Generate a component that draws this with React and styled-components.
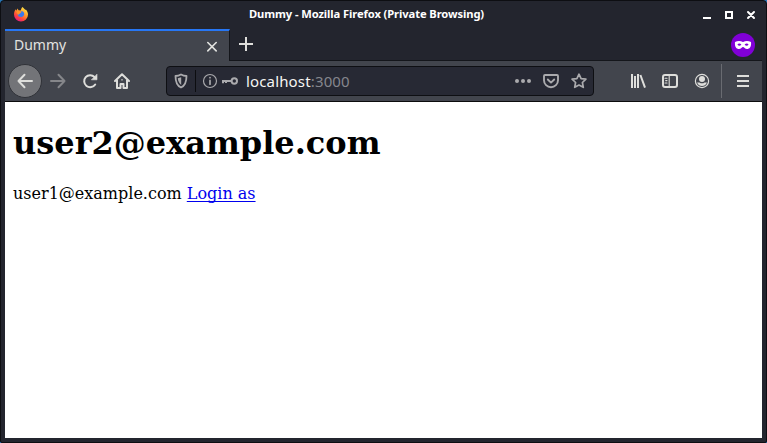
import React from 'react';
import styled, { createGlobalStyle } from 'styled-components';

const GlobalStyle = createGlobalStyle`
  * { box-sizing: border-box; }
  html, body { margin: 0; padding: 0; background: #2777b8; overflow: hidden; }
`;

const Window = styled.div`
  width: 767px;
  height: 443px;
  display: flex;
  flex-direction: column;
  padding: 0 4px 4px;
  background: #23252e;
  border: 1px solid #0d0e12;
  border-radius: 4px 4px 2px 2px;
  font-family: 'Noto Sans', sans-serif;
`;

const TitleBar = styled.header`
  height: 28px;
  flex: none;
  display: grid;
  grid-template-columns: 80px 1fr 80px;
  align-items: center;
`;

const Logo = styled.span`
  display: flex;
  padding-left: 8px;
  margin-top: -2px;
`;

const Title = styled.h2`
  margin: 0;
  padding: 0 34px 2px 0;
  text-align: center;
  white-space: nowrap;
  color: #fff;
  font-size: 11.2px;
  font-weight: 700;
  line-height: 16px;
  letter-spacing: -0.1px;
`;

const WindowControls = styled.div`
  display: flex;
  gap: 8px;
  justify-content: flex-end;
  padding-right: 4px;
  margin-top: -3px;
`;

const TabStrip = styled.div`
  height: 32px;
  flex: none;
  display: flex;
`;

const Tab = styled.div`
  width: 225px;
  height: 33px;
  padding: 0 9px 0 9px;
  display: flex;
  align-items: center;
  justify-content: space-between;
  color: #e2e3e0;
  font-size: 14px;
  background: #42454d;
  border-top: 2px solid #2777f5;
  border-right: 1px solid #14161b;
`;

const TabLabel = styled.span`
  line-height: 20px;
  padding-bottom: 3px;
`;

const StripRest = styled.div`
  flex: 1;
  height: 32px;
  display: flex;
  align-items: center;
  justify-content: space-between;
  padding: 0 7px 0 8px;
  border-bottom: 1px solid #14161b;
`;

const NewTab = styled.span`
  display: flex;
  padding-bottom: 2px;
  color: #dededb;
`;

const PrivateBadge = styled.span`
  display: flex;
  align-items: center;
  justify-content: center;
  width: 24px;
  height: 24px;
  border-radius: 50%;
  background: #8000d7;
`;

const Toolbar = styled.nav`
  height: 41px;
  flex: none;
  display: flex;
  align-items: center;
  padding-left: 4px;
  background: #42454d;
  border-bottom: 1px solid #0c0c0d;
`;

const NavButton = styled.button`
  display: flex;
  align-items: center;
  justify-content: center;
  width: 32px;
  height: 32px;
  padding: 0;
  border: 0;
  background: none;
  color: ${(p) => (p.$dim ? '#85868a' : '#dededb')};
`;

const BackButton = styled(NavButton)`
  width: 34px;
  height: 34px;
  margin: 0 0 0 -1px;
  border: 1px solid #303238;
  border-radius: 50%;
  background: #737478;
`;

const AddressBar = styled.div`
  width: 428px;
  height: 30px;
  margin-left: 28px;
  display: flex;
  align-items: center;
  padding: 0 6px 0 6px;
  color: #aaaaad;
  background: #272934;
  border: 1px solid #0e0f13;
  border-radius: 4px;
`;

const AddressDivider = styled.span`
  width: 1px;
  height: 22px;
  margin: 0 6px 0 6px;
  background: #0c0d10;
`;

const Address = styled.span`
  flex: 1;
  margin-left: 8px;
  color: #f5f5f2;
  font-size: 15px;
  line-height: 20px;
  letter-spacing: 0.15px;
`;

const Port = styled.span`
  color: #85868d;
`;

const AddressActions = styled.span`
  display: flex;
  gap: 12px;
`;

const ToolbarEnd = styled.div`
  display: flex;
  align-items: center;
  margin-left: 28px;
`;

const ToolbarDivider = styled.span`
  width: 1px;
  height: 34px;
  margin: 0 5px 0 3px;
  background: #696b71;
`;

const Page = styled.main`
  flex: 1;
  padding: 1px 8px 0;
  background: #fff;
  color: #000;
  font: 16px/19px 'DejaVu Serif', serif;
`;

const Heading = styled.h1`
  margin: 21px 0;
  font-size: 32px;
  line-height: 39px;
  font-weight: 700;
`;

const LoginLink = styled.a`
  color: #0000ee;
  text-decoration: underline;
  text-decoration-thickness: 1px;
  text-underline-offset: 2px;
  text-decoration-skip-ink: none;
`;

const Svg = styled.svg`
  display: block;
  flex: none;
  fill: ${(p) => (p.$solid ? 'currentColor' : 'none')};
  stroke: ${(p) => (p.$solid ? 'none' : 'currentColor')};
  stroke-width: ${(p) => p.$weight || 2};
  stroke-linecap: ${(p) => (p.$flat ? 'butt' : 'round')};
  stroke-linejoin: round;
`;

const Icon = ({ size = 16, children, ...rest }) => (
  <Svg width={size} height={size} viewBox="0 0 16 16" {...rest}>{children}</Svg>
);

const FirefoxLogo = () => (
  <Svg $solid width="16" height="16" viewBox="0 0 16 16">
    <defs>
      <linearGradient id="flame" x1="0.85" y1="0.05" x2="0.25" y2="1">
        <stop offset="0" stopColor="#fff04a" />
        <stop offset="0.4" stopColor="#ff9a2b" />
        <stop offset="0.7" stopColor="#ff4a39" />
        <stop offset="1" stopColor="#e31587" />
      </linearGradient>
    </defs>
    <path fill="url(#flame)" d="M9.6 1C10.4 2.3 11.6 2.8 12.4 4.1L12.9 3.5C14.3 5 15 6.7 15 8.6A7 6.9 0 0 1 1 8.6C1 6.4 1.7 4.6 2.8 3.3L3.2 4.7L4.6 2.6L5.5 4.2L7.6 4.4C8.1 3.5 8.3 2.1 9.6 1Z" />
    <path fill="#3979ef" d="M5.2 6.2C6.8 6.7 7.7 5 9.4 5.3C12 6.3 12 10.7 8.2 11.1C6 11.2 4.6 9.6 4.6 8Z" />
    <path fill="#ff9426" d="M3.5 5.2L6.9 5.1L8.4 6.5L6.8 7.4L5.6 8.8C4.4 8 3.5 6.7 3.5 5.2Z" />
  </Svg>
);

export default function App() {
  return (
    <>
      <GlobalStyle />
      <Window>
        <TitleBar>
          <Logo><FirefoxLogo /></Logo>
          <Title>Dummy - Mozilla Firefox (Private Browsing)</Title>
          <WindowControls>
            <Svg $solid width="14" height="14" viewBox="0 0 14 14" color="#fff"><path d="M3 10h8v2H3z" /></Svg>
            <Svg $solid width="14" height="14" viewBox="0 0 14 14" color="#fff"><path fillRule="evenodd" d="M3 4h8v8H3zM5 6v4h4V6z" /></Svg>
            <Svg width="14" height="14" viewBox="0 0 14 14" color="#fff"><path d="M4 5l6 6M10 5l-6 6" /></Svg>
          </WindowControls>
        </TitleBar>
        <TabStrip>
          <Tab>
            <TabLabel>Dummy</TabLabel>
            <Icon $weight={1.6}><path d="M3.8 3.5l8.4 8.4M12.2 3.5l-8.4 8.4" /></Icon>
          </Tab>
          <StripRest>
            <NewTab><Icon $flat><path d="M8 1v14M1 8h14" /></Icon></NewTab>
            <PrivateBadge>
              <Svg $solid color="#fff" width="18" height="10" viewBox="0 0 18 10">
                <path fillRule="evenodd" d="M1 2Q5-.2 9 2Q13-.2 17 2C17.5 6 16 9 13 9C11 9 10 7 9 7C8 7 7 9 5 9C2 9 .5 6 1 2ZM3.4 4.8Q5.6 7 7.4 4.6Q5 2.5 3.4 4.8ZM10.6 4.6Q12.4 7 14.6 4.8Q13 2.5 10.6 4.6Z" />
              </Svg>
            </PrivateBadge>
          </StripRest>
        </TabStrip>
        <Toolbar>
          <BackButton aria-label="Back"><Icon><path d="M15 8H1.5M7.5 1.8L1.5 8l6 6.2" /></Icon></BackButton>
          <NavButton $dim aria-label="Forward"><Icon><path d="M1 8h13.5M8.5 1.8l6 6.2-6 6.2" /></Icon></NavButton>
          <NavButton aria-label="Reload"><Icon><path d="M13.2 11.5A6 6 0 1 1 12.5 4" /><path d="M15 1.5v5.3H9.7z" fill="currentColor" strokeWidth="0.6" /></Icon></NavButton>
          <NavButton aria-label="Home"><Icon><path d="M1 8l7-6.7L15 8M3 7v8h3.5v-4h3v4H13V7" /><path d="M8 6.8v.1" strokeWidth="1.4" /></Icon></NavButton>
          <AddressBar>
            <Icon><path d="M8 1.5Q10.5 3 13.5 3C13.5 9 12 12.8 8 14.5C4 12.8 2.5 9 2.5 3Q5.5 3 8 1.5Z" strokeWidth="1.8" /><path d="M8.2 4.3v7.7C6 10 5 8 4.8 5.3Q6.5 5 8.2 4.3Z" fill="currentColor" stroke="none" /></Icon>
            <AddressDivider />
            <Icon><circle cx="8" cy="8" r="6.5" strokeWidth="1.2" /><path d="M8 7.4v3.8M8 4.6v.1" strokeWidth="1.7" /></Icon>
            <Svg width="20" height="16" viewBox="-4 0 20 16"><circle cx="12.3" cy="8" r="2.7" /><path d="M9.5 8H0M1 8v2.3M4 8v2" strokeLinecap="butt" /></Svg>
            <Address>localhost<Port>:3000</Port></Address>
            <AddressActions>
              <Icon $solid><circle cx="2" cy="8" r="2" /><circle cx="8" cy="8" r="2" /><circle cx="14" cy="8" r="2" /></Icon>
              <Icon><path d="M2 2h12q1 0 1 1v4.2a7 7 0 0 1-14 0V3q0-1 1-1zM4.8 6.5L8 9.6l3.2-3.1" strokeWidth="1.9" /></Icon>
              <Icon><path d="M8 1.2l2.1 4.4 4.8.6-3.5 3.3.9 4.8L8 12l-4.3 2.3.9-4.8L1.1 6.2l4.8-.6z" strokeWidth="1.7" /></Icon>
            </AddressActions>
          </AddressBar>
          <ToolbarEnd>
            <NavButton aria-label="Library"><Icon $flat><path d="M2 1v14M5 3v12M8 1v14M10.4 2l4.6 12.6" /></Icon></NavButton>
            <NavButton aria-label="Sidebars"><Icon><rect x="1" y="2" width="14" height="12" rx="2" /><path d="M7.2 2.5v11M3 5.2h2M3.7 7.6H5M3 10h2" strokeWidth="1.1" /></Icon></NavButton>
            <NavButton aria-label="Account"><Icon><circle cx="8" cy="8" r="6.6" strokeWidth="1.2" /><circle cx="8" cy="6" r="3" fill="currentColor" stroke="none" /><path d="M3 9.5h2.4q2.6 1.7 5.2 0H13Q11.4 13 8 13T3 9.5z" fill="currentColor" stroke="none" /></Icon></NavButton>
            <ToolbarDivider />
            <NavButton aria-label="Menu"><Icon $flat><path d="M2 3h12M2 8h12M2 13h12" /></Icon></NavButton>
          </ToolbarEnd>
        </Toolbar>
        <Page>
          <Heading>user2@example.com</Heading>
          user1@example.com <LoginLink href="#">Login as</LoginLink>
        </Page>
      </Window>
    </>
  );
}
